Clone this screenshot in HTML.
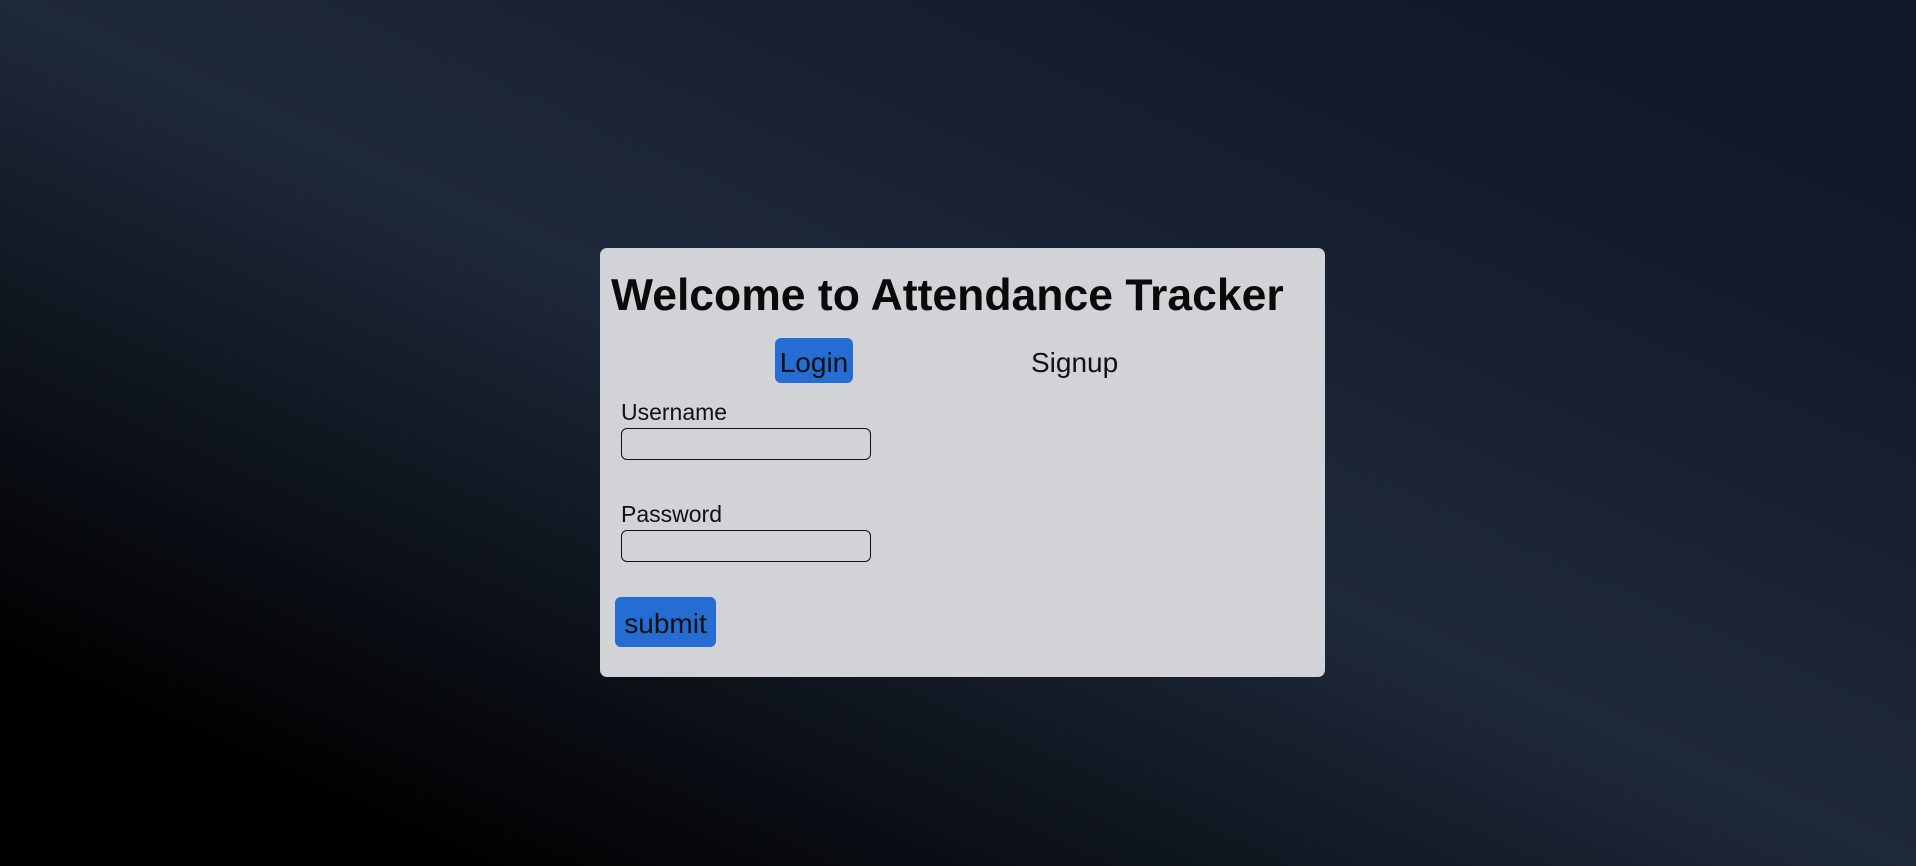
<!DOCTYPE html>
<html><head><meta charset="utf-8"><style>
html,body{margin:0;padding:0;width:1916px;height:866px;overflow:hidden}
body{background:linear-gradient(to top right,#000 12%,#1e293b 50%,#111827 88%);font-family:"Liberation Sans",sans-serif;position:relative}
.card{position:absolute;left:600px;top:248px;width:725px;height:429px;background:#d1d3d7;border-radius:7px}
h1{position:absolute;left:11px;top:23px;margin:0;font-size:44.5px;font-weight:bold;color:#0a0a0a;letter-spacing:0;white-space:nowrap}
.login{position:absolute;left:175px;top:90px;width:78px;height:45px;background:#266dd3;border-radius:6px;font-size:28px;line-height:50px;text-align:center;color:#111;box-sizing:border-box;overflow:hidden}
.signup{position:absolute;left:431px;top:90px;font-size:28px;line-height:50px;color:#111}
.lbl{position:absolute;left:21px;font-size:23px;color:#111}
.inp{position:absolute;left:21px;border:1.5px solid #111;border-radius:6px;box-sizing:border-box;width:250px;height:32px}
.sub{position:absolute;left:15px;top:349px;width:101px;height:50px;background:#266dd3;border-radius:6px;font-size:28px;line-height:54px;text-align:center;color:#111}
</style></head><body>
<div class="card">
<h1>Welcome to Attendance Tracker</h1>
<div class="login">Login</div>
<div class="signup">Signup</div>
<div class="lbl" style="top:151px">Username</div>
<div class="inp" style="top:180px"></div>
<div class="lbl" style="top:253px">Password</div>
<div class="inp" style="top:282px"></div>
<div class="sub">submit</div>
</div>
</body></html>
